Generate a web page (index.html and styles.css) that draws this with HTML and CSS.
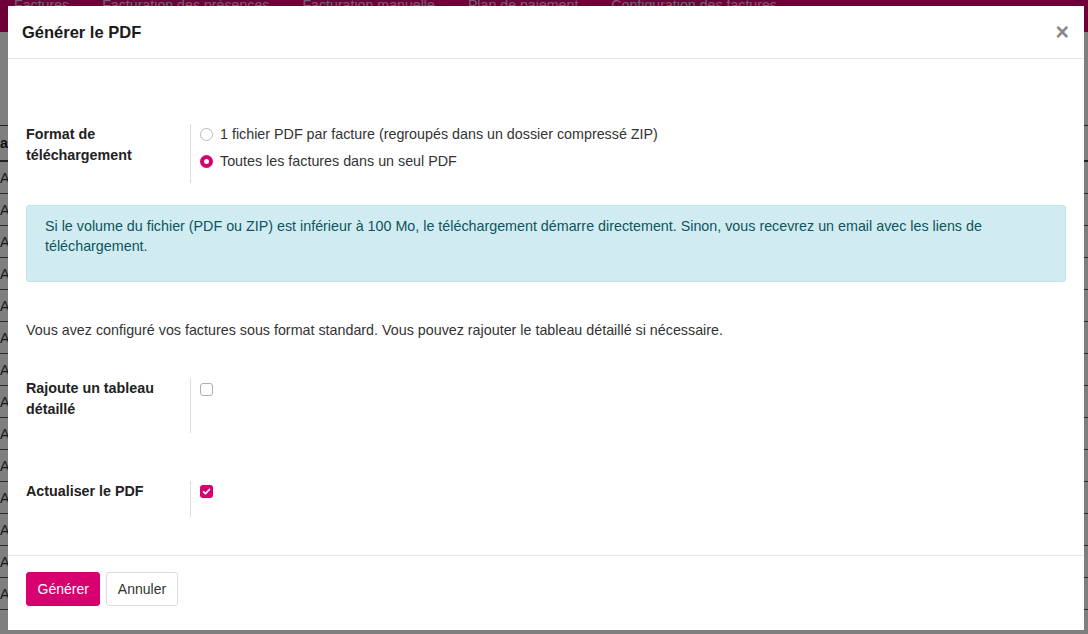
FILE: index.html
```html
<!DOCTYPE html>
<html lang="fr">
<head>
    <meta charset="UTF-8">
    <meta name="viewport" content="width=device-width, initial-scale=1.0">
    <title>Générer le PDF</title>

    <link rel="stylesheet" href="styles.css">

</head>
<body>

    <nav class="topnav">
        <a href="#">Factures</a>
        <a href="#">Facturation des présences</a>
        <a href="#">Facturation manuelle</a>
        <a href="#">Plan de paiement</a>
        <a href="#">Configuration des factures</a>
    </nav>

    <main class="page">
        <table class="invoices">
            <thead>
                <tr><th>a</th></tr>
            </thead>
            <tbody>
                <tr><td>A</td></tr>
                <tr><td>A</td></tr>
                <tr><td>A</td></tr>
                <tr><td>A</td></tr>
                <tr><td>A</td></tr>
                <tr><td>A</td></tr>
                <tr><td>A</td></tr>
                <tr><td>A</td></tr>
                <tr><td>A</td></tr>
                <tr><td>A</td></tr>
                <tr><td>A</td></tr>
                <tr><td>A</td></tr>
                <tr><td>A</td></tr>
                <tr><td>A</td></tr>
            </tbody>
        </table>
    </main>

    <div class="overlay">
        <div class="modal">
            <div class="modal-header">
                <h4 class="modal-title">Générer le PDF</h4>
                <button class="close" type="button">&times;</button>
            </div>

            <div class="modal-body">
                <div class="form-row">
                    <div class="form-label">Format de téléchargement</div>
                    <div class="form-field">
                        <label class="choice">
                            <input type="radio" name="format">
                            <span class="radio"></span>
                            1 fichier PDF par facture (regroupés dans un dossier compressé ZIP)
                        </label>
                        <label class="choice">
                            <input type="radio" name="format" checked>
                            <span class="radio checked"></span>
                            Toutes les factures dans un seul PDF
                        </label>
                    </div>
                </div>

                <div class="alert">
                    Si le volume du fichier (PDF ou ZIP) est inférieur à 100 Mo, le téléchargement démarre directement. Sinon, vous recevrez un email avec les liens de téléchargement.
                </div>

                <p class="note">Vous avez configuré vos factures sous format standard. Vous pouvez rajouter le tableau détaillé si nécessaire.</p>

                <div class="form-row row-detail">
                    <div class="form-label">Rajoute un tableau détaillé</div>
                    <div class="form-field">
                        <label class="choice">
                            <input type="checkbox">
                            <span class="box"></span>
                        </label>
                    </div>
                </div>

                <div class="form-row row-refresh">
                    <div class="form-label">Actualiser le PDF</div>
                    <div class="form-field">
                        <label class="choice">
                            <input type="checkbox" checked>
                            <span class="box checked">
                                <svg width="13" height="13" viewBox="0 0 13 13"><path d="M3.6 6.9l1.9 1.8 3.9-4.2" fill="none" stroke="#fff" stroke-width="1.8" stroke-linecap="round" stroke-linejoin="round"/></svg>
                            </span>
                        </label>
                    </div>
                </div>
            </div>

            <div class="modal-footer">
                <button class="btn btn-primary" type="button">Générer</button>
                <button class="btn btn-default" type="button">Annuler</button>
            </div>
        </div>
    </div>

</body>
</html>
```

FILE: styles.css
```css
body {
    font-family: "Liberation Sans", Arial, sans-serif;
    font-size: 14.3px;
    color: #333;
    background-color: #ffffff;
    margin: 0;
    overflow: hidden;
}

/* page behind the modal */

.topnav {
    display: flex;
    gap: 33px;
    height: 32px;
    padding-left: 14px;
    background-color: #da0072;
    overflow: hidden;
}

.topnav a {
    color: rgba(255, 255, 255, 0.75);
    text-decoration: none;
    font-size: 14.2px;
    line-height: 14px;
    margin-top: -2px;
}

.page {
    padding-top: 93px;
}

.invoices {
    border-collapse: collapse;
    width: 100%;
}

.invoices th {
    text-align: left;
    height: 34px;
    padding: 0;
    border-top: 1px solid #444;
    border-bottom: 2px solid #444;
    color: #222;
}

.invoices td {
    height: 31px;
    padding: 0;
    border-bottom: 1px solid #555;
    color: #333;
}

.overlay {
    position: fixed;
    inset: 0;
    background: rgba(0, 0, 0, 0.5);
    padding: 6px 4px 0 8px;
}

/* modal */

.modal {
    background: white;
    display: flex;
    flex-direction: column;
}

.modal-header {
    display: flex;
    justify-content: space-between;
    align-items: center;
    padding: 16px 15px 15px 14px;
    border-bottom: 1px solid #e5e5e5;
}

.modal-title {
    margin: 0;
    font-size: 16.5px;
    line-height: 21px;
    font-weight: bold;
    color: #1a1a1a;
}

.close {
    background: none;
    border: none;
    padding: 0;
    font-family: "Liberation Sans", Arial, sans-serif;
    font-size: 23px;
    font-weight: bold;
    line-height: 21px;
    color: #888;
    cursor: pointer;
}

.modal-body {
    padding: 65px 18px 38px;
}

.form-row {
    display: flex;
}

.form-label {
    width: 164px;
    flex-shrink: 0;
    font-weight: bold;
    line-height: 21px;
    color: #222;
    padding-right: 20px;
    box-sizing: border-box;
}

.form-field {
    border-left: 1px solid #ddd;
    padding-left: 9px;
    display: flex;
    flex-direction: column;
    gap: 7px;
    padding-bottom: 12px;
}

.choice {
    display: flex;
    align-items: center;
    gap: 7px;
    line-height: 20px;
    color: #333;
    cursor: pointer;
}

.choice input {
    display: none;
}

.radio {
    width: 13px;
    height: 13px;
    box-sizing: border-box;
    border: 1px solid #b5b9be;
    border-radius: 50%;
    background: white;
}

.radio.checked {
    border: 4px solid #d8006f;
}

.box {
    width: 13px;
    height: 13px;
    box-sizing: border-box;
    border: 1px solid #a9b0b8;
    border-radius: 3px;
    background: white;
    display: flex;
}

.box.checked {
    border: none;
    background: #d8006f;
}

.alert {
    margin-top: 22px;
    padding: 10px 18px 25px;
    line-height: 20px;
    background-color: #d1ecf1;
    border: 1px solid #bee5eb;
    border-radius: 3px;
    color: #0c5460;
}

.note {
    margin: 38px 0 0;
    line-height: 20px;
    color: #333;
}

.row-detail {
    margin-top: 38px;
}

.row-detail .form-field {
    height: 55px;
    box-sizing: border-box;
    padding-top: 5px;
}

.row-refresh {
    margin-top: 48px;
}

.row-refresh .form-field {
    height: 36px;
    box-sizing: border-box;
    padding-top: 4px;
}

.row-detail .choice,
.row-refresh .choice {
    line-height: 13px;
}

.modal-footer {
    display: flex;
    gap: 6px;
    padding: 16px 18px 24px;
    border-top: 1px solid #e5e5e5;
}

.btn {
    font-family: "Liberation Sans", Arial, sans-serif;
    font-size: 14px;
    line-height: 20px;
    padding: 6px 10.5px;
    border-radius: 3px;
    cursor: pointer;
}

.btn-primary {
    background-color: #d8006f;
    border: 1px solid #d8006f;
    color: white;
}

.btn-default {
    background-color: white;
    border: 1px solid #dcdcdc;
    color: #333;
}
```
